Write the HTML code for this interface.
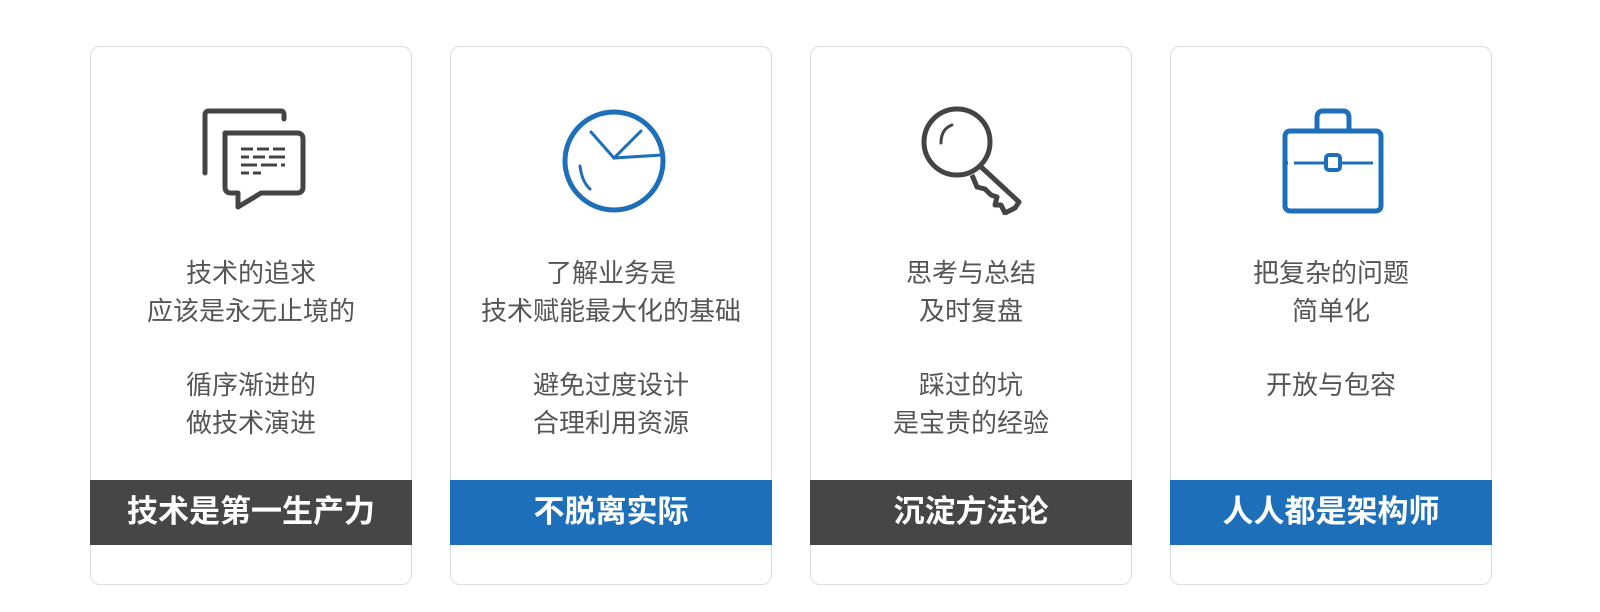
<!DOCTYPE html>
<html><head><meta charset="utf-8"><style>
body{margin:0;background:#fff;width:1600px;height:612px;overflow:hidden;font-family:"Liberation Sans","Noto Sans CJK SC",sans-serif}
.card{position:absolute;top:46px;width:322px;height:539px;border:1px solid #dcdcdc;border-radius:10px;box-sizing:border-box}
.icon{position:absolute;left:106px;top:58px;width:110px;height:110px}
.txt{position:absolute;top:207px;left:0;right:0;text-align:center;color:#555;font-size:26px;line-height:38px}
.band{position:absolute;top:433px;left:-1px;right:-1px;height:65px;color:#fff;font-size:31px;font-weight:bold;text-align:center;line-height:63px}
.g{background:#464646}.b{background:#1e6fba}
</style></head><body>
<div class="card" style="left:90px">
<svg class="icon" viewBox="0 0 110 110" fill="none" stroke="#444" stroke-width="5" stroke-linecap="round" stroke-linejoin="round">
<path d="M8 68V10Q8 6 12 6H84Q87 6 87 10V14"/>
<path d="M28 28H100Q106 28 106 34V82Q106 88 100 88H64L41 102V88H34Q28 88 28 82Z"/>
<g stroke-width="3" stroke-linecap="butt"><path d="M44 44h12M60 44h12M76 44h12M44 52h8M56 52h12M72 52h16M44 60h16M64 60h16M84 60h4M44 68h8M56 68h8"/></g>
</svg>
<div class="txt">技术的追求<br>应该是永无止境的<div style="height:36px"></div>循序渐进的<br>做技术演进</div>
<div class="band g">技术是第一生产力</div></div>
<div class="card" style="left:450px">
<svg class="icon" viewBox="0 0 110 110" fill="none" stroke="#1e6fba" stroke-width="5" stroke-linecap="round">
<circle cx="57" cy="56" r="49"/>
<path d="M34 27L57 53L84 26M57 53L105 50" stroke-width="3"/>
<path d="M23 61Q25 77 33 84" stroke-width="3"/>
</svg>
<div class="txt">了解业务是<br>技术赋能最大化的基础<div style="height:36px"></div>避免过度设计<br>合理利用资源</div>
<div class="band b">不脱离实际</div></div>
<div class="card" style="left:810px">
<svg class="icon" viewBox="0 0 110 110" fill="none" stroke="#444" stroke-width="5" stroke-linejoin="round">
<circle cx="40" cy="37" r="33"/>
<path d="M62 60L102 97L98 103L88 108L84 100L78 100L80 92L74 90L68 84L60 82L55 70"/>
<path d="M24 38Q24 24 35 20" stroke-width="3" stroke-linecap="round"/>
</svg>
<div class="txt">思考与总结<br>及时复盘<div style="height:36px"></div>踩过的坑<br>是宝贵的经验</div>
<div class="band g">沉淀方法论</div></div>
<div class="card" style="left:1170px">
<svg class="icon" viewBox="0 0 110 110" fill="none" stroke="#1e6fba" stroke-width="5" stroke-linejoin="round">
<rect x="8" y="26" width="96" height="80" rx="5"/>
<path d="M40 26V13Q40 6 46 6H66Q72 6 72 13V26"/>
<rect x="49" y="50" width="14" height="15" rx="3" stroke-width="4"/>
<path d="M8 58H11M17 58H49M63 58H96M102 58H104" stroke-width="3"/>
</svg>
<div class="txt">把复杂的问题<br>简单化<div style="height:36px"></div>开放与包容</div>
<div class="band b">人人都是架构师</div></div>
</body></html>
